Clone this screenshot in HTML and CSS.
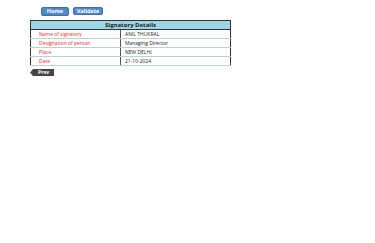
FILE: index.html
```html
<!DOCTYPE html>
<html>
<head>
<meta charset="utf-8">
<link rel="stylesheet" href="styles.css">
</head>
<body>
<div class="page">
  <div class="nav">
    <button class="btn home">Home</button>
    <button class="btn validate">Validate</button>
  </div>
  <table class="sig">
    <tr><th colspan="2" class="head">Signatory Details</th></tr>
    <tr><td class="lbl">Name of signatory</td><td class="val">ANIL THUKRAL</td></tr>
    <tr><td class="lbl">Designation of person</td><td class="val">Managing Director</td></tr>
    <tr><td class="lbl">Place</td><td class="val">NEW DELHI</td></tr>
    <tr><td class="lbl">Date</td><td class="val">21-10-2024</td></tr>
  </table>
  <div class="prev-row"><span class="prev">Prev</span></div>
</div>
</body>
</html>
```
FILE: styles.css
```css
html, body { margin: 0; padding: 0; background: #fff; }
body { font-family: "Open Sans", "Liberation Sans", sans-serif; }
.page { padding: 7px 0 0 30px; }
.nav { display: flex; gap: 4px; padding-left: 11px; }
.btn {
  font-family: "Open Sans", sans-serif;
  font-size: 5.5px; font-weight: 700; color: #fff;
  background: #5088c8; border: 1px solid #3d6fae; border-radius: 2px;
  height: 9px; padding: 0; line-height: 7px; text-align: center;
}
.home { width: 28px; }
.validate { width: 30px; height: 8px; }
.sig {
  border-collapse: collapse; width: 201px; margin-top: 4px;
  border: 1.5px solid #333; font-size: 5px;
}
.head {
  background: #9dd6e3; color: #222; font-weight: 700; font-size: 6px;
  height: 8px; padding: 0; border-bottom: 1px solid #333; text-align: center;
}
.sig td { height: 8px; padding: 0 0 0 8px; border-bottom: 1px solid #b8d0e0; }
.sig td.val { padding-left: 4px; }
.lbl { color: #f41a1a; width: 81px; border-right: 1px solid #555; }
.val { color: #222; }
.prev-row { display: flex; margin-top: 3px; }
.prev {
  display: block; background: #444; color: #fff; font-size: 5px; font-weight: 700;
  height: 7px; line-height: 7px; padding: 0 5px 0 8px;
  clip-path: polygon(0 50%, 3px 0, 100% 0, 100% 100%, 3px 100%);
}
```
